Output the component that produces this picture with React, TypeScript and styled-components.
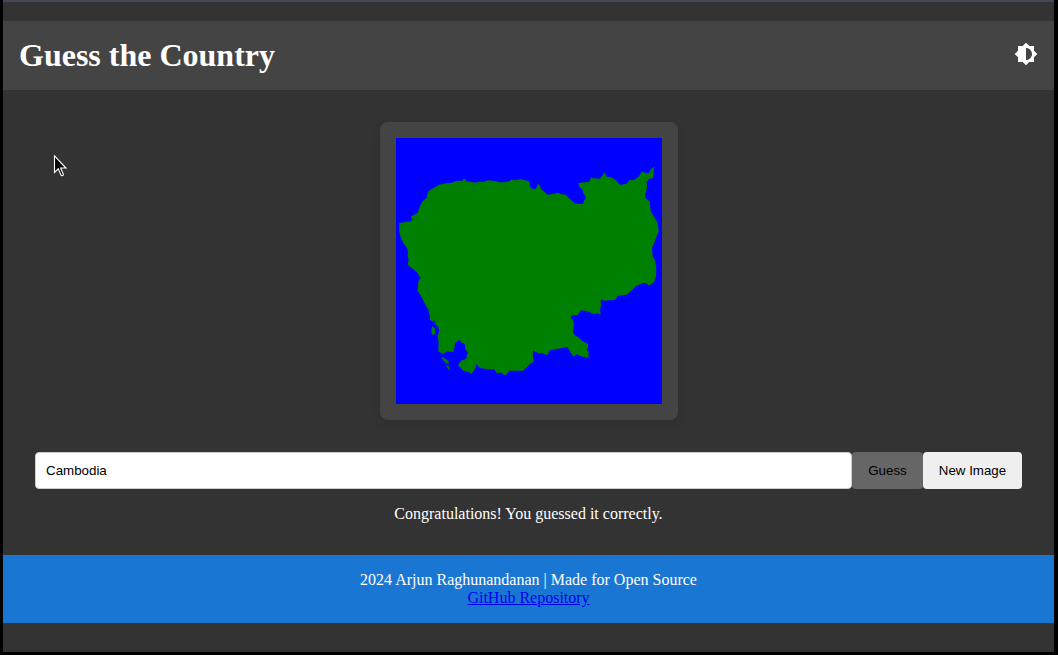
import React, { useState } from "react";
import styled, { createGlobalStyle } from "styled-components";
import { MdBrightness6 } from "react-icons/md";

const GlobalStyle = createGlobalStyle`
  body {
    margin: 0;
    background: #000;
    font-family: "Liberation Serif", "Times New Roman", serif;
    font-size: 16px;
    overflow: hidden;
  }
  * { box-sizing: border-box; }
`;

const Frame = styled.div`
  height: 655px;
  padding: 0 4px 3px 3px;
  background: #000;
`;

const Page = styled.div`
  height: 652px;
  padding-top: 19px;
  border-top: 2px solid #424859;
  background: #333;
  color: #fff;
`;

const Header = styled.header`
  display: flex;
  align-items: center;
  justify-content: space-between;
  height: 69px;
  padding: 16px;
  background: #444;
`;

const Title = styled.h1`
  margin: 0;
  font-size: 32px;
  line-height: 37px;
`;

const ThemeToggle = styled.button`
  display: flex;
  margin: 0 0 3px;
  padding: 0;
  border: 0;
  background: none;
  color: #fff;
  font-size: 24px;
`;

const Main = styled.main`
  display: flex;
  flex-direction: column;
  align-items: center;
  padding: 32px;
`;

const Card = styled.div`
  padding: 16px;
  margin-bottom: 32px;
  border-radius: 8px;
  background: #444;
  box-shadow: 0 4px 8px rgba(0, 0, 0, 0.1);
`;

const CountryMap = styled.svg`
  display: block;
  width: 266px;
  height: 266px;
  background: #00f;
`;

const GuessForm = styled.form`
  display: flex;
  align-self: stretch;
  height: 37px;
`;

const GuessInput = styled.input`
  flex: 1;
  min-width: 0;
  padding: 10px;
  border: 1px solid #ccc;
  border-radius: 4px;
  outline: none;
  background: #fff;
  color: #000;
  font: 13.333px "Liberation Sans", Arial, sans-serif;
`;

const Button = styled.button<{ $muted?: boolean }>`
  width: ${(p) => (p.$muted ? "71px" : "99px")};
  padding: 0;
  border: 0;
  border-radius: 4px;
  background: ${(p) => (p.$muted ? "#666" : "#efefef")};
  color: #000;
  font: 13.333px "Liberation Sans", Arial, sans-serif;
`;

const Message = styled.p`
  margin: 16px 0 0;
  line-height: 18px;
`;

const Footer = styled.footer`
  height: 68px;
  padding: 16px;
  background: #1976d2;
  text-align: center;
  line-height: 18px;
`;

const RepoLink = styled.a`
  color: #0000ee;
`;

const Pointer = styled.svg`
  position: absolute;
  left: 53px;
  top: 154px;
  width: 14px;
  height: 24px;
`;

const mainland =
  "10,255 46,250 50,244 44,237 52,232 65,225 69,212 73,202 80,190 92,180 95,166 98,160 112,150 130,140 150,136 168,134 178,129 190,128 198,129 202,123 207,122 211,130 222,131 240,134 246,131 262,132 276,127 290,128 300,130 310,133 325,133 340,130 346,125 360,127 375,123 386,127 400,130 402,146 412,154 420,152 425,140 429,138 436,154 455,170 470,168 485,164 495,168 510,170 518,180 538,197 562,198 564,188 571,178 562,166 560,155 550,148 547,135 562,133 580,132 585,118 592,121 612,122 620,112 626,103 633,117 645,118 658,125 672,140 690,138 702,125 712,127 720,122 728,116 738,100 746,104 758,106 765,94 775,86 773,100 771,120 760,122 752,132 753,150 747,170 750,182 761,190 764,220 774,236 785,255 788,280 778,305 768,330 770,355 778,370 781,395 780,415 774,432 759,443 752,436 742,435 720,444 706,458 692,470 665,474 657,486 640,487 625,488 618,484 613,489 616,500 612,514 614,530 604,526 592,528 580,522 568,519 555,517 545,532 530,532 523,538 531,546 533,555 533,570 531,585 540,594 550,600 560,610 576,618 576,628 572,635 578,644 577,660 560,656 545,650 542,648 536,655 530,653 514,627 500,630 480,634 462,637 454,652 440,646 428,646 412,638 410,650 414,670 402,678 393,687 382,698 340,698 328,713 316,704 302,705 295,694 275,694 252,690 241,678 238,692 226,708 218,702 202,699 186,682 195,668 210,663 215,643 208,634 206,617 197,614 190,605 178,615 172,642 155,640 140,648 127,640 128,614 125,595 130,578 125,563 118,565 112,552 102,545 102,535 97,515 88,500 77,478 65,458 67,430 74,420 62,402 50,392 35,380 38,364 35,354 36,340 33,330 22,315 13,295 10,280";

const islands = [
  "110,566 116,572 117,588 109,589 107,576",
  "139,658 156,668 158,676 149,674 139,663",
  "151,683 157,685 161,695 157,692",
];

export default function App() {
  const [guess, setGuess] = useState("Cambodia");
  return (
    <>
      <GlobalStyle />
      <Frame>
        <Page>
          <Header>
            <Title>Guess the Country</Title>
            <ThemeToggle aria-label="Toggle theme">
              <MdBrightness6 />
            </ThemeToggle>
          </Header>
          <Main>
            <Card>
              <CountryMap viewBox="0 0 798 798">
                <polygon points={mainland} fill="#008000" />
                {islands.map((points) => (
                  <polygon key={points} points={points} fill="#008000" stroke="#008000" strokeWidth="2" />
                ))}
                <path d="M112 548L118 555M116 558L124 568" stroke="#00f" strokeWidth="4" />
              </CountryMap>
            </Card>
            <GuessForm onSubmit={(e) => e.preventDefault()}>
              <GuessInput value={guess} onChange={(e) => setGuess(e.target.value)} />
              <Button $muted>Guess</Button>
              <Button type="button">New Image</Button>
            </GuessForm>
            <Message>Congratulations! You guessed it correctly.</Message>
          </Main>
          <Footer>
            2024 Arjun Raghunandanan | Made for Open Source
            <br />
            <RepoLink href="#">GitHub Repository</RepoLink>
          </Footer>
        </Page>
      </Frame>
      <Pointer viewBox="0 0 14 24">
        <path
          d="M1.5 1.8V18.4L5.3 14.8L8 21C8.6 22.4 10.8 21.5 10.2 20L7.6 14H12.9Z"
          fill="#000"
          stroke="#fff"
          strokeWidth="1.1"
        />
      </Pointer>
    </>
  );
}
